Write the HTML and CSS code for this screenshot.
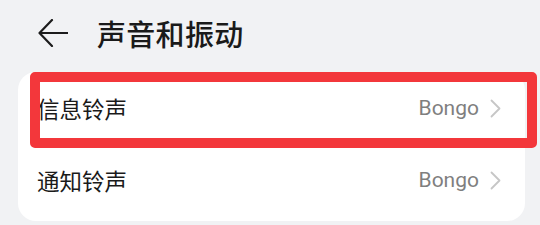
FILE: index.html
```html
<!DOCTYPE html>
<html lang="zh-CN">

<head>
    <meta charset="UTF-8">
    <meta name="viewport" content="width=device-width, initial-scale=1.0">
    <title>声音和振动</title>
    <link rel="stylesheet" href="styles.css">
</head>

<body>

    <div class="header">
        <svg class="back" width="30" height="28" viewBox="0 0 30 28">
            <path d="M14 1 L1.5 14 L14 27 M1.5 14 H30" fill="none" stroke="#1c1c1c" stroke-width="2.2" stroke-linecap="round" stroke-linejoin="round"/>
        </svg>
        <h1>声音和振动</h1>
    </div>

    <div class="card">
        <div class="row">
            <span class="label">信息铃声</span>
            <span class="value">Bongo</span>
            <svg class="chevron" width="11" height="19" viewBox="0 0 11 19">
                <path d="M1.5 1.5 L9.5 9.5 L1.5 17.5" fill="none" stroke="#c6c6c6" stroke-width="1.8" stroke-linecap="round" stroke-linejoin="round"/>
            </svg>
        </div>
        <div class="row">
            <span class="label">通知铃声</span>
            <span class="value">Bongo</span>
            <svg class="chevron" width="11" height="19" viewBox="0 0 11 19">
                <path d="M1.5 1.5 L9.5 9.5 L1.5 17.5" fill="none" stroke="#c6c6c6" stroke-width="1.8" stroke-linecap="round" stroke-linejoin="round"/>
            </svg>
        </div>
    </div>

    <!-- annotation box over the first row -->
    <div class="highlight"></div>

</body>

</html>
```

FILE: styles.css
```css
body {
    font-family: "Noto Sans CJK SC", "Noto Sans", sans-serif;
    margin: 0;
    padding: 0;
    background-color: #f1f2f4;
    color: #1a1a1a;
    width: 540px;
    height: 225px;
    overflow: hidden;
    position: relative;
}

/* Header */
.header {
    display: flex;
    align-items: center;
    height: 66px;
    padding-left: 38px;
}

.header .back {
    display: block;
    margin-right: 29px;
}

.header h1 {
    margin: 0;
    font-size: 29px;
    font-weight: 500;
    letter-spacing: 0.3px;
}

/* Settings card */
.card {
    background-color: #ffffff;
    border-radius: 18px;
    margin: 6px 15px 0 18px;
    padding-bottom: 5px;
}

.row {
    display: flex;
    align-items: center;
    height: 72px;
    padding: 0 24px 0 19px;
}

.row .label {
    flex: 1;
    font-size: 22.5px;
}

.row .value {
    font-family: Roboto, "Noto Sans", sans-serif;
    font-size: 21px;
    color: #7f7f7f;
    margin-right: 11px;
}

.row .chevron {
    display: block;
}

/* Red annotation frame */
.highlight {
    position: absolute;
    left: 30px;
    top: 72px;
    width: 507px;
    height: 76px;
    box-sizing: border-box;
    border: 10px solid #f3373b;
    border-radius: 5px;
}
```
